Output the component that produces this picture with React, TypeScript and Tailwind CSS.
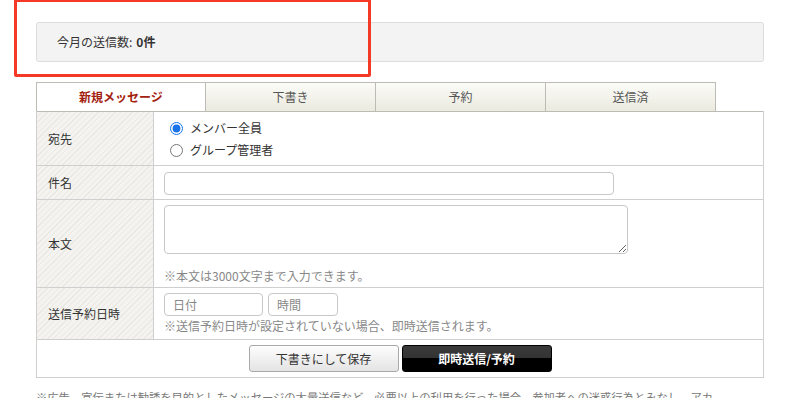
const font = { fontFamily: '"Noto Sans CJK JP", "Noto Sans", sans-serif' };

const stripe =
  "bg-[repeating-linear-gradient(135deg,#f4f3ef_0px,#f4f3ef_3px,#e9e8e3_3px,#e9e8e3_4px)]";

function Row({
  label,
  children,
  className = "",
}: {
  label: string;
  children: React.ReactNode;
  className?: string;
}) {
  return (
    <div className="flex border-t border-[#cfcfcf]">
      <div
        className={`w-[117px] shrink-0 border-r border-[#cfcfcf] pl-[11px] flex items-center ${stripe}`}
      >
        {label}
      </div>
      <div className={`flex-1 pl-[10px] ${className}`}>{children}</div>
    </div>
  );
}

const inputCls =
  "block h-[23px] rounded-[4px] border border-[#c8c8c8] bg-white px-[8px] text-[12px] text-[#333] placeholder:text-[#888] outline-none";

export default function App() {
  return (
    <div
      className="relative w-[810px] h-[398px] overflow-hidden bg-white text-[12px] text-[#333]"
      style={font}
    >
      <div className="ml-[36px] w-[728px] pt-[22px]">
        <div className="h-[40px] rounded-[3px] border border-[#dddddd] bg-[#f3f3f3] pl-[20px] flex items-center">
          今月の送信数: <span className="ml-[4px] font-bold">0件</span>
        </div>

        <div className="mt-[20px] flex">
          {["新規メッセージ", "下書き", "予約", "送信済"].map((t, i) => (
            <div
              key={t}
              className={`w-[170px] h-[29px] border-t border-r border-[#bdbcb4] flex items-center justify-center ${
                i === 0
                  ? "border-l bg-white font-bold text-[#a3200e]"
                  : "bg-[linear-gradient(#fbfbf8,#ebeadf)] text-[#555]"
              }`}
            >
              {t}
            </div>
          ))}
        </div>

        <div className="border-x border-b border-[#cfcfcf] [&>div:first-child]:border-[#bdbcb4]">
          <Row label="宛先" className="pt-[5px] pb-[4px]">
            <label className="flex items-center h-[22px] pl-[6px] gap-[7px]">
              <input
                type="radio"
                name="to"
                defaultChecked
                className="m-0 w-[13px] h-[13px] accent-[#1a73e8]"
              />
              メンバー全員
            </label>
            <label className="flex items-center h-[22px] pl-[6px] gap-[7px]">
              <input
                type="radio"
                name="to"
                className="m-0 w-[13px] h-[13px] accent-[#1a73e8]"
              />
              グループ管理者
            </label>
          </Row>

          <Row label="件名" className="pt-[6px] pb-[4px]">
            <input className={`${inputCls} w-[450px]`} />
          </Row>

          <Row label="本文" className="pt-[5px] pb-[2px]">
            <textarea className="block w-[464px] h-[49px] rounded-[4px] border border-[#c8c8c8] bg-white px-[8px] text-[12px] outline-none" />
            <p className="mt-[13px] leading-[18px] text-[#888]">
              ※本文は3000文字まで入力できます。
            </p>
          </Row>

          <Row label="送信予約日時" className="pt-[5px] pb-[4px]">
            <div className="flex gap-[5px]">
              <input placeholder="日付" className={`${inputCls} w-[99px]`} />
              <input placeholder="時間" className={`${inputCls} w-[70px]`} />
            </div>
            <p className="mt-[1px] leading-[18px] text-[#888]">
              ※送信予約日時が設定されていない場合、即時送信されます。
            </p>
          </Row>

          <div className="flex justify-center gap-[3px] border-t border-[#cfcfcf] pt-[5px] pb-[5px]">
            <button className="w-[150px] h-[27px] rounded-[3px] border border-[#a9a9a9] bg-[linear-gradient(#fdfdfd,#e4e4e4)] text-[12px] text-[#333]">
              下書きにして保存
            </button>
            <button className="w-[150px] h-[27px] rounded-[3px] border border-black bg-[linear-gradient(#3a3a3a_0%,#333_50%,#000_50%,#000_100%)] text-[12px] font-bold text-white">
              即時送信/予約
            </button>
          </div>
        </div>

        <p className="mt-[10px] w-[685px] text-[11.3px] leading-[18px] text-[#777]">
          ※広告、宣伝または勧誘を目的としたメッセージの大量送信など、必要以上の利用を行った場合、参加者への迷惑行為とみなし、アカウントを停止する場合があります。
        </p>
      </div>

      <div className="absolute left-[14px] top-[-1px] w-[357px] h-[78px] rounded-[2px] border-[3px] border-[#f43a26]" />
    </div>
  );
}
